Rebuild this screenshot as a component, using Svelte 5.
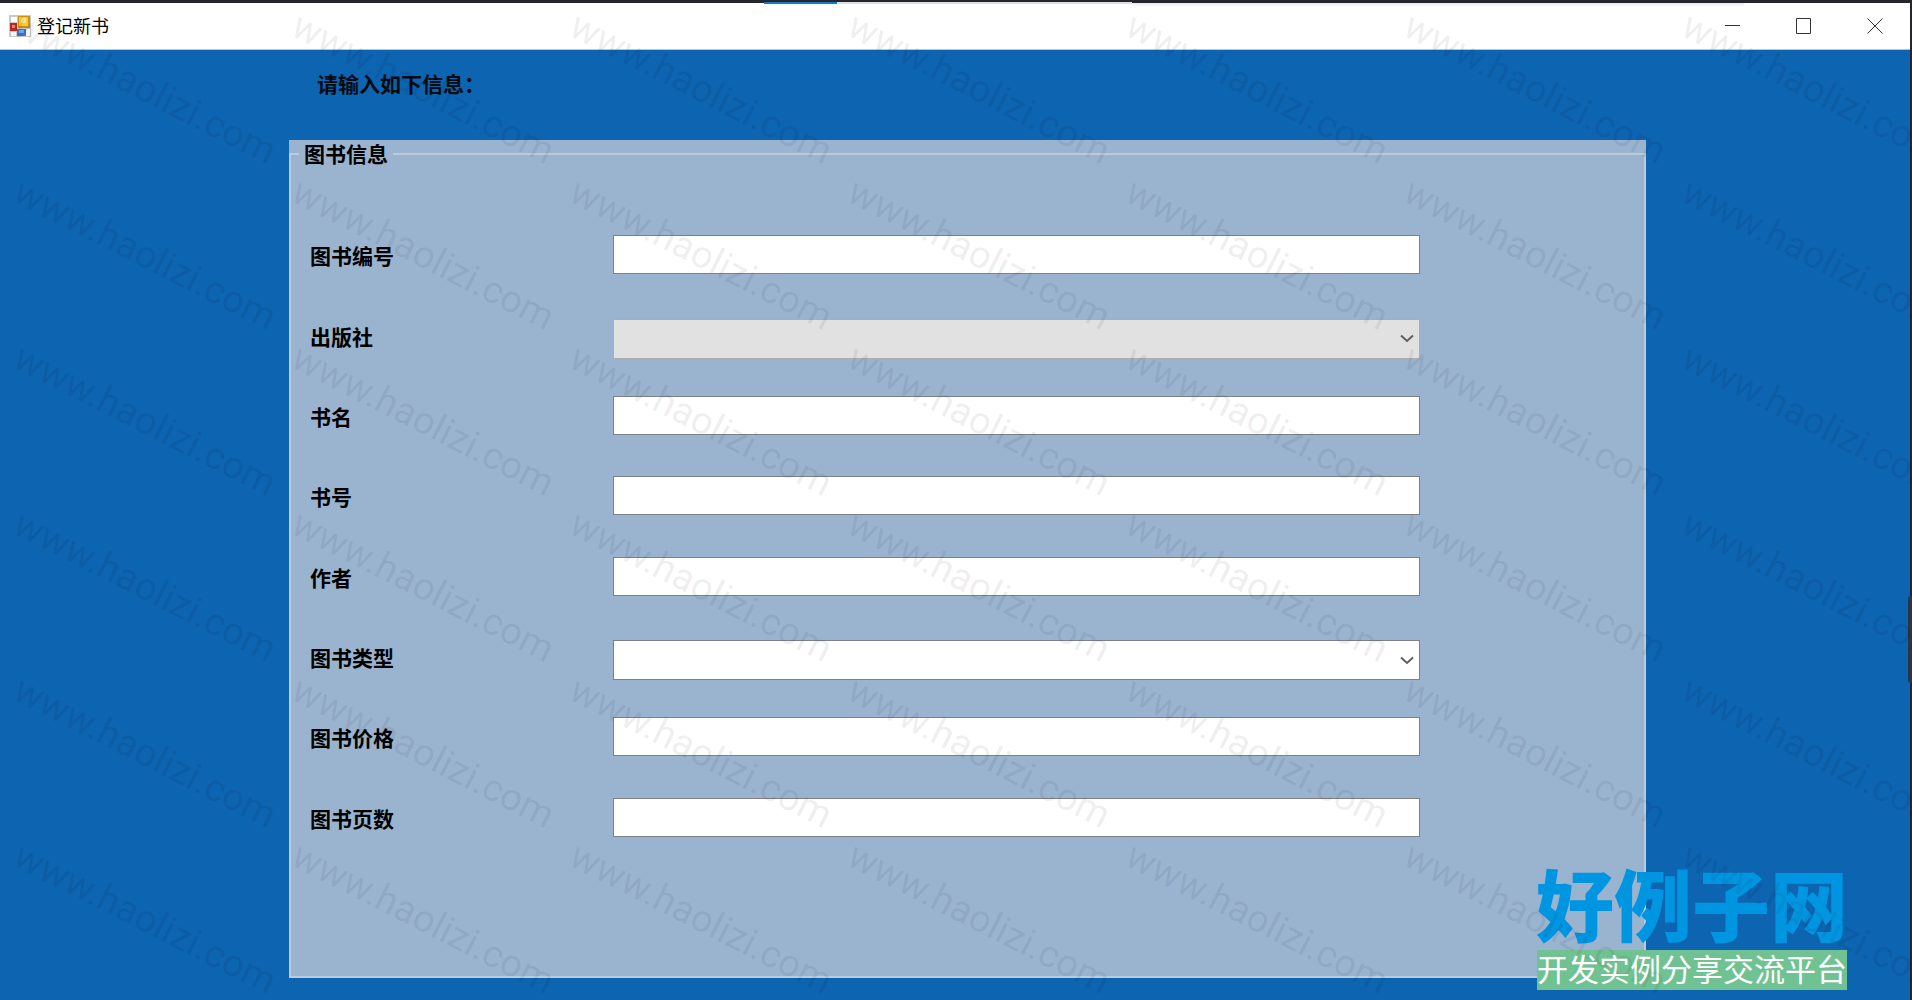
<script>
  const fields = [
    { id: 'book-code', label: '图书编号', kind: 'text' },
    { id: 'publisher', label: '出版社', kind: 'select', disabled: true },
    { id: 'title', label: '书名', kind: 'text' },
    { id: 'isbn', label: '书号', kind: 'text' },
    { id: 'author', label: '作者', kind: 'text' },
    { id: 'book-type', label: '图书类型', kind: 'select', disabled: false },
    { id: 'price', label: '图书价格', kind: 'text' },
    { id: 'pages', label: '图书页数', kind: 'text' }
  ];
  const marks = Array.from({ length: 42 });
</script>

<div class="desktop">
  <div class="strip"><i class="tab-active"></i><i class="tab"></i><i class="shade"></i></div>
  <div class="window">
    <header class="titlebar">
      <svg class="app-icon" width="22" height="22" viewBox="0 0 22 22" aria-hidden="true">
        <rect x="0" y="0" width="22" height="22" fill="#c9c9c9" />
        <rect x="2" y="2" width="6" height="5" fill="#fff" />
        <rect x="2" y="17" width="5" height="4" fill="#f4f4f4" />
        <rect x="17" y="14" width="4" height="7" fill="#f4f4f4" />
        <rect x="1" y="8" width="7" height="8" fill="#b8281f" />
        <rect x="3" y="10" width="3" height="3" fill="#e98079" />
        <rect x="9" y="1" width="12" height="12" fill="#c8920c" />
        <rect x="10" y="2" width="9" height="9" fill="#f9c936" />
        <rect x="12" y="3" width="5" height="5" fill="#ffe08a" />
        <rect x="8" y="14" width="9" height="7" fill="#3e74cf" />
        <rect x="10" y="15" width="5" height="3" fill="#7aa9f2" />
      </svg>
      <h1>登记新书</h1>
      <div class="controls">
        <button type="button" aria-label="最小化">
          <svg width="16" height="16" viewBox="0 0 16 16"><path d="M0 7.5h15" /></svg>
        </button>
        <button type="button" aria-label="最大化">
          <svg width="16" height="16" viewBox="0 0 16 16"><path d="M.5 .5h14v15h-14z" /></svg>
        </button>
        <button type="button" aria-label="关闭">
          <svg width="16" height="16" viewBox="0 0 16 16"><path d="M.5 .5l15 15M15.5 .5l-15 15" /></svg>
        </button>
      </div>
    </header>

    <main>
      <p class="prompt">请输入如下信息：</p>
      <form class="panel" aria-labelledby="group-name">
        <div class="caption"><span id="group-name">图书信息</span></div>
        <div class="rows">
          {#each fields as f (f.id)}
            <div class="row">
              <label for={f.id}>{f.label}</label>
              {#if f.kind === 'select'}
                <div class="combo">
                  <select id={f.id} disabled={f.disabled}></select>
                  <svg width="14" height="9" viewBox="0 0 14 9" aria-hidden="true"><path d="M1 1.500l6 5.500 6-5.500" /></svg>
                </div>
              {:else}
                <input id={f.id} type="text" />
              {/if}
            </div>
          {/each}
        </div>
      </form>
    </main>
  </div>

  <div class="handle"></div>

  <div class="brand">
    <strong>好例子网</strong>
    <span>开发实例分享交流平台</span>
  </div>

  <div class="watermarks" aria-hidden="true">
    {#each marks as _}
      <div class="cell"><span>www.haolizi.com</span></div>
    {/each}
  </div>
</div>

<style>
  :global(body) { background: #25252b; }
  .desktop {
    position: relative;
    box-sizing: border-box;
    display: flex;
    flex-direction: column;
    min-height: 100vh;
    padding-right: 2px;
    overflow: hidden;
    background: #25252b;
    color: #000;
    font-family: "Noto Sans CJK SC", sans-serif;
  }
  .strip { display: flex; height: 3px; padding-left: 40%; position: relative; z-index: 1; }
  .strip i { height: 2px; margin-top: 2px; }
  .tab-active { width: 73px; background: #1579cf; }
  .tab { width: 295px; background: #dededd; }
  .strip .shade { width: 612px; height: 4px; margin-top: 3px; background: linear-gradient(#ebebeb, #fff); }
  .window { flex: 1; display: flex; flex-direction: column; }
  .titlebar {
    display: flex;
    align-items: center;
    height: 46px;
    padding-left: 9px;
    background: #fff;
    border-bottom: 1px solid #a9c8e2;
  }
  h1 { flex: 1; margin: 0 0 2px 6px; font-size: 18px; line-height: 24px; font-weight: 400; }
  .controls { display: flex; align-self: stretch; }
  .controls button {
    display: flex;
    align-items: center;
    justify-content: center;
    width: 71px;
    padding: 0;
    border: 0;
    background: none;
  }
  .controls path { fill: none; stroke: #333; }
  main {
    flex: 1;
    display: flex;
    flex-direction: column;
    padding: 18px 264px 22px 289px;
    background: #0d64b0;
  }
  .prompt { margin: 0 28px 42px; font-size: 21px; line-height: 30px; font-weight: 700; color: #020a12; }
  .panel { flex: 1; display: flex; flex-direction: column; background: #9ab4d0; }
  .caption { display: flex; height: 15px; }
  .caption::before, .caption::after { content: ""; border-bottom: 2px solid #bccada; }
  .caption::before { width: 10px; }
  .caption::after { flex: 1; }
  .caption span { margin: 0 5px; font-size: 21px; line-height: 26px; font-weight: 700; }
  .rows {
    flex: 1;
    display: grid;
    grid-auto-rows: 1fr;
    padding: 62px 224px 116px 19px;
    border: 2px solid #bccada;
    border-top: 0;
  }
  .row { display: flex; align-items: center; }
  label { width: 303px; padding-bottom: 4px; font-size: 21px; line-height: 30px; font-weight: 700; }
  input, select {
    box-sizing: border-box;
    width: 100%;
    border: 1px solid #7d8086;
    border-radius: 0;
    background: #fff;
    font: 20px/30px "Noto Sans CJK SC", sans-serif;
    outline: 0;
    padding: 0 8px;
  }
  input { flex: 1; min-width: 0; height: 39px; margin-bottom: 5px; }
  .combo { flex: 1; display: grid; align-items: center; margin-top: 2px; }
  .combo > * { grid-area: 1 / 1; }
  select { height: 40px; appearance: none; }
  select:disabled { background: #e1e1e1; border-color: #adadad; opacity: 1; }
  .combo svg { justify-self: end; margin-right: 6px; pointer-events: none; }
  .combo path { fill: none; stroke: #606060; stroke-width: 2; }
  .handle {
    position: absolute;
    right: 0;
    top: 596px;
    width: 4px;
    height: 87px;
    border-radius: 3px 0 0 3px;
    background: #30343f;
  }
  .brand {
    position: absolute;
    right: 64px;
    bottom: 10px;
    display: flex;
    flex-direction: column;
    align-items: center;
    white-space: nowrap;
  }
  .brand strong { padding-bottom: 8px; font-size: 78px; line-height: 80px; font-weight: 900; color: #0095e0; }
  .brand span { background: #70c292; color: #fff; font-size: 31px; line-height: 36px; padding-bottom: 4px; font-weight: 400; }
  .watermarks {
    position: absolute;
    inset: 0;
    display: grid;
    grid-template-columns: repeat(7, 278px);
    grid-auto-rows: 166px;
    overflow: hidden;
    pointer-events: none;
  }
  .cell { padding: 3px 0 0 27px; }
  .cell span {
    display: block;
    width: max-content;
    font: 38px/44px Roboto, sans-serif;
    color: rgba(0, 0, 0, 0.08);
    transform: rotate(27deg);
    transform-origin: 0 0;
  }
</style>
